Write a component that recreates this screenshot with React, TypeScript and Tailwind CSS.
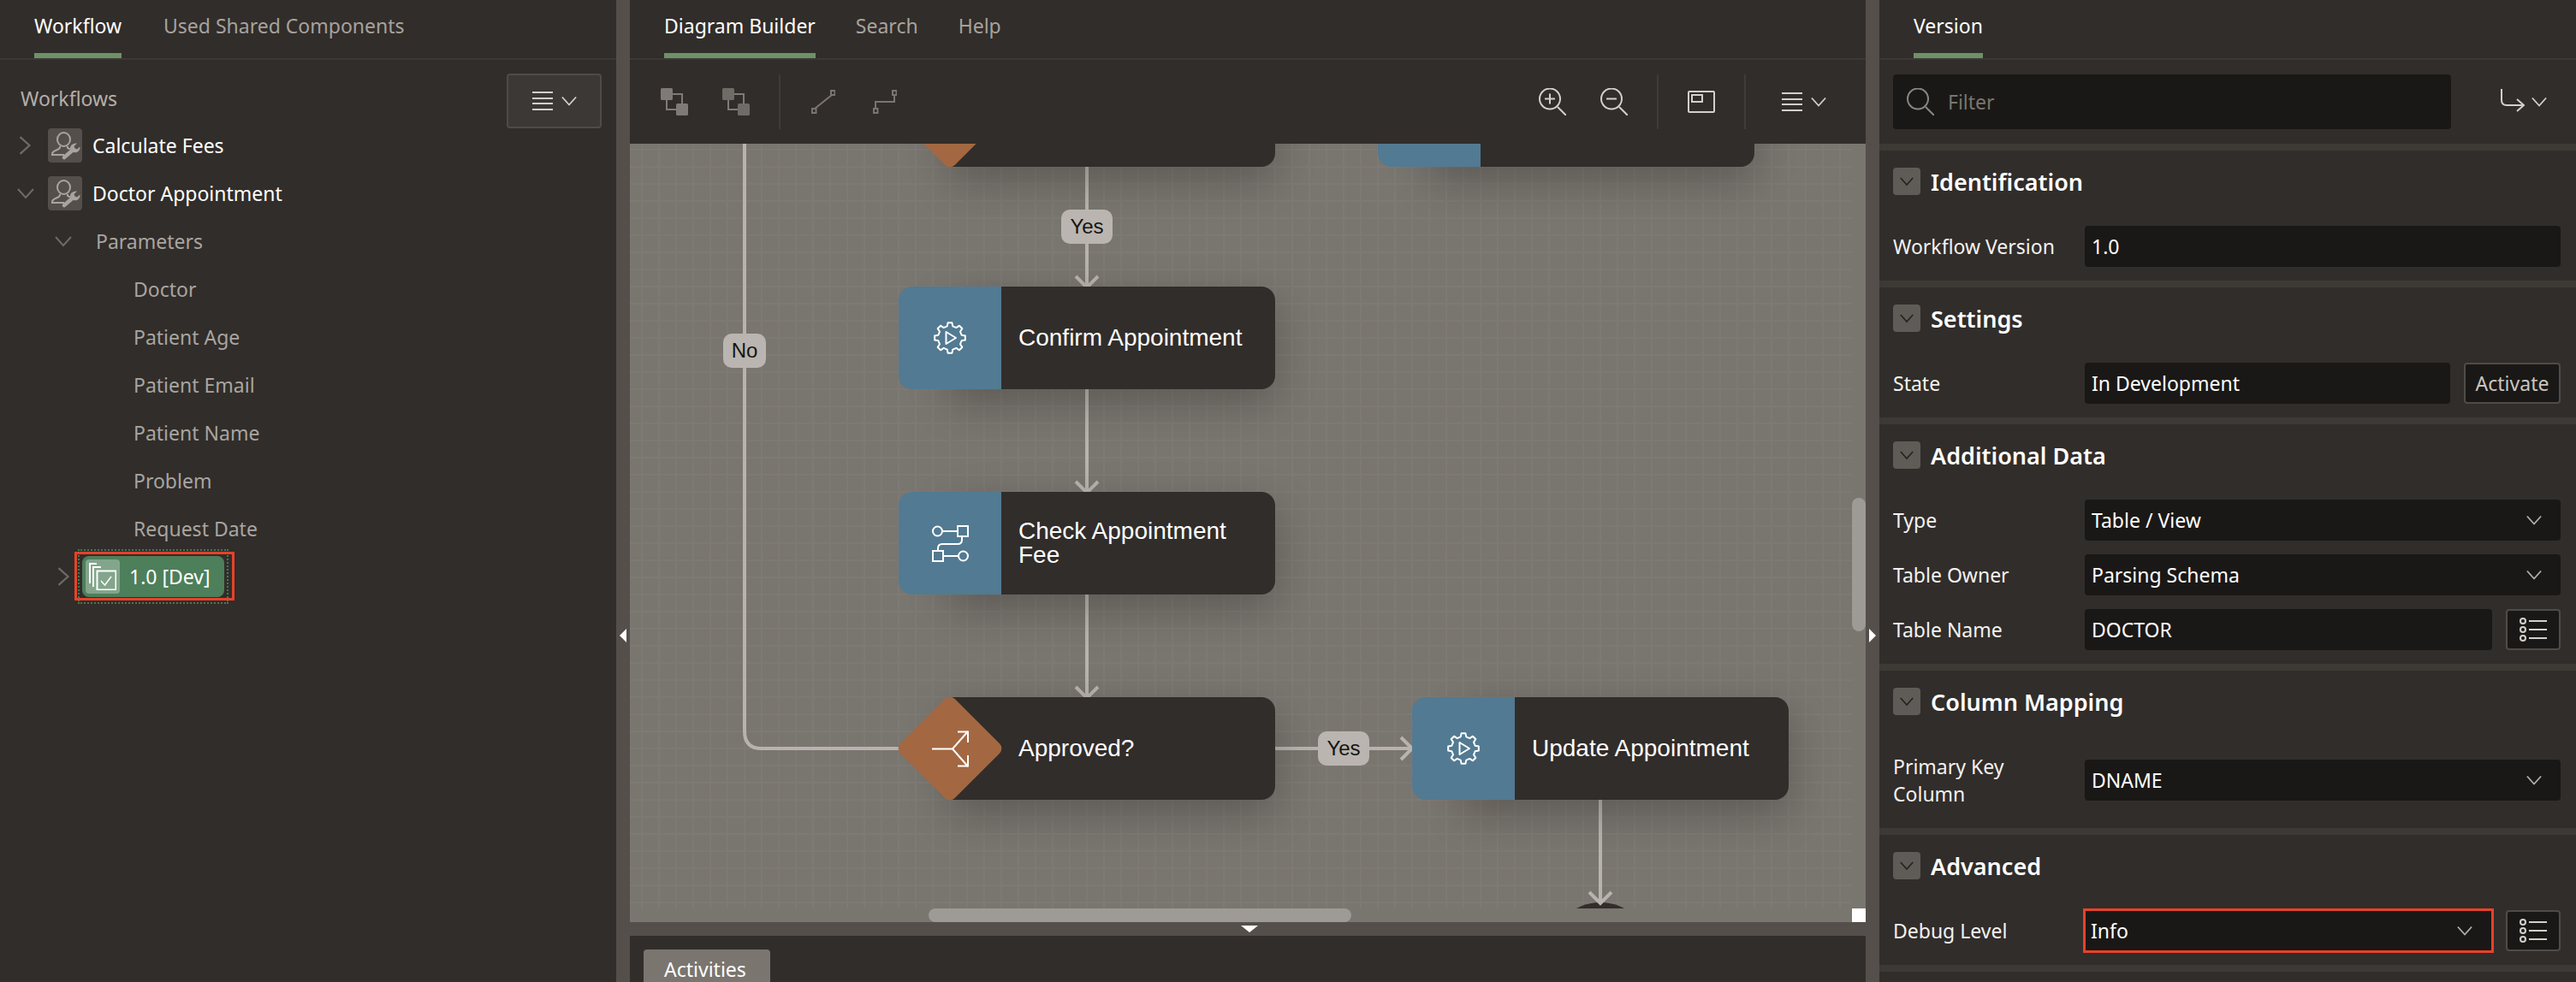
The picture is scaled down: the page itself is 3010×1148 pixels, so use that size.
const Chevron = ({ dir = "down", className = "" }: { dir?: "down" | "right"; className?: string }) => (
  <svg viewBox="0 0 20 20" className={className} fill="none" stroke="currentColor" strokeWidth="2">
    {dir === "down" ? <path d="M1 5 L10 15 L19 5" /> : <path d="M5 1 L15 10 L5 19" />}
  </svg>
)

const Hamburger = ({ className = "" }: { className?: string }) => (
  <svg viewBox="0 0 24 22" className={className} fill="none" stroke="currentColor" strokeWidth="2">
    <path d="M0 1 H24 M0 8 H24 M0 14 H24 M0 21 H24" />
  </svg>
)

const PersonWrench = () => (
  <div className="flex h-10 w-10 shrink-0 items-center justify-center rounded bg-[#544f4a] text-[#a8a4a0]">
    <svg viewBox="0 0 40 40" className="h-10 w-10" fill="none" stroke="currentColor" strokeWidth="2">
      <ellipse cx="18.5" cy="13" rx="7.5" ry="8" />
      <path d="M14 21 V22 C14 26 5 25 5 30 V31 H19" />
      <path d="M23 21 V23 L26 24.5" />
      <path d="M19 34 L29.5 25" strokeWidth="4.5" strokeLinecap="round" />
      <path
        d="M26.5 25 C25 21 28 17 34 17.5 L30.5 21 L31.5 23.5 L34 24.5 L37.5 21.5 C38 26 34 29.5 30 28 Z"
        fill="currentColor"
        stroke="none"
      />
    </svg>
  </div>
)

const Tab = ({ label, active = false }: { label: string; active?: boolean }) => (
  <div
    className={`h-[68px] border-b-[6px] pt-[15px] text-[23px] leading-[30px] ${
      active ? "border-[#6e9168] text-white" : "border-transparent text-[#a7a29d]"
    }`}
  >
    {label}
  </div>
)

const params = ["Doctor", "Patient Age", "Patient Email", "Patient Name", "Problem", "Request Date"]

function LeftPanel() {
  return (
    <div className="h-full w-[720px] shrink-0 bg-[#312d2a]">
      <div className="flex h-[70px] gap-[49px] border-b-2 border-[#3c3835] pl-[40px]">
        <Tab label="Workflow" active />
        <Tab label="Used Shared Components" />
      </div>
      <div className="relative pl-[24px] pt-[30px]">
        <div className="h-[30px] text-[23px] leading-[30px] text-[#b3afaa]">Workflows</div>
        <button className="absolute right-[17px] top-[16px] flex h-[64px] w-[111px] items-center justify-center gap-[10px] rounded border-2 border-[#4f4b47] bg-[#3c3835] text-[#d3cfca]">
          <Hamburger className="h-[22px] w-[24px]" />
          <Chevron className="h-[18px] w-[18px]" />
        </button>
      </div>
      <div className="mt-[12px] text-[23px]">
        <div className="flex h-[56px] items-center text-white">
          <Chevron dir="right" className="ml-[18px] mr-[16px] h-[22px] w-[22px] text-[#6f6a65]" />
          <PersonWrench />
          <span className="ml-[12px]">Calculate Fees</span>
        </div>
        <div className="flex h-[56px] items-center text-white">
          <Chevron className="ml-[20px] mr-[16px] h-[20px] w-[20px] text-[#6f6a65]" />
          <PersonWrench />
          <span className="ml-[12px]">Doctor Appointment</span>
        </div>
        <div className="flex h-[56px] items-center text-[#a9a5a0]">
          <Chevron className="ml-[64px] mr-[28px] h-[20px] w-[20px] text-[#6f6a65]" />
          <span>Parameters</span>
        </div>
        {params.map((p) => (
          <div key={p} className="flex h-[56px] items-center pl-[156px] text-[#a9a5a0]">
            {p}
          </div>
        ))}
        <div className="relative flex h-[56px] items-center">
          <Chevron dir="right" className="ml-[63px] mr-[11px] h-[22px] w-[22px] text-[#6f6a65]" />
          <div className="relative flex h-[48px] w-[166px] items-center rounded-lg bg-[#4d7f5b] pl-[4px] text-white">
            <div className="absolute -inset-x-[5px] -inset-y-[8px] border-2 border-dotted border-[#3f7a56]" />
            <div className="absolute -left-[9px] -right-[12px] -top-[5px] -bottom-[4px] border-[3px] border-[#e8412a]" />
            <div className="flex h-10 w-10 items-center justify-center rounded bg-[#83a58c]">
              <svg viewBox="0 0 32 32" className="h-8 w-8" fill="none" stroke="white" strokeWidth="2">
                <path d="M9 1 H1 V24" />
                <path d="M14 5 H5 V28" />
                <rect x="9.5" y="9.5" width="22" height="22" />
                <path d="M14 21 L18.5 26 L26 16" strokeWidth="1.5" />
              </svg>
            </div>
            <span className="ml-[11px] whitespace-nowrap">1.0 [Dev]</span>
          </div>
        </div>
      </div>
    </div>
  )
}

const Divider = ({ className = "" }: { className?: string }) => (
  <div className={`h-[64px] w-[2px] bg-[#3f3b38] ${className}`} />
)

const GroupIcon = ({ fill, stroke, className = "" }: { fill: string; stroke: string; className?: string }) => (
  <svg viewBox="0 0 32 32" className={`h-8 w-8 ${className}`} fill="none">
    <rect x="7" y="7" width="18" height="18" stroke={stroke} strokeWidth="2" />
    <rect x="0" y="0" width="14" height="14" rx="1.5" fill={fill} />
    <rect x="18" y="18" width="14" height="14" rx="1.5" fill={fill} />
  </svg>
)

const ZoomIcon = ({ plus = false, className = "" }: { plus?: boolean; className?: string }) => (
  <svg viewBox="0 0 32 32" className={`h-8 w-8 ${className}`} fill="none" stroke="currentColor" strokeWidth="2">
    <circle cx="13" cy="12.5" r="12" />
    <path d="M22 22 L32 32" />
    <path d="M7 12.5 H19" />
    {plus && <path d="M13 6.5 V18.5" />}
  </svg>
)

function Toolbar() {
  return (
    <div className="flex h-[98px] items-center bg-[#312d2a] text-[#d3cfca]">
      <GroupIcon fill="#7f7a75" stroke="#7f7a75" className="ml-[36px]" />
      <GroupIcon fill="#6f6b66" stroke="#7f7a75" className="ml-[40px]" />
      <Divider className="ml-[34px]" />
      <svg viewBox="0 0 28 28" className="ml-[36px] h-7 w-7" fill="none" stroke="#7a756f" strokeWidth="2">
        <rect x="1" y="22" width="4.5" height="5" />
        <rect x="23" y="1" width="4.5" height="5" />
        <path d="M4 22 L24 6" />
      </svg>
      <svg viewBox="0 0 28 28" className="ml-[44px] h-7 w-7" fill="none" stroke="#7a756f" strokeWidth="2">
        <rect x="1" y="22" width="4.5" height="5" />
        <rect x="23" y="1" width="4.5" height="5" />
        <path d="M3 22 V14 H25 V6" />
      </svg>
      <ZoomIcon plus className="ml-auto" />
      <ZoomIcon className="ml-[40px]" />
      <Divider className="ml-[34px]" />
      <svg viewBox="0 0 32 26" className="ml-[34px] h-[26px] w-8" fill="none" stroke="currentColor" strokeWidth="2">
        <rect x="1" y="1" width="30" height="24" rx="1" />
        <rect x="5" y="5" width="12" height="8" />
      </svg>
      <Divider className="ml-[34px]" />
      <Hamburger className="ml-[42px] h-[22px] w-[24px]" />
      <Chevron className="ml-[10px] mr-[46px] h-[18px] w-[18px]" />
    </div>
  )
}

// 8 tooth gear outline, used on the blue activity tiles
const gearPath = (() => {
  const pts: string[] = []
  for (let i = 0; i < 8; i++) {
    const a = (i * Math.PI) / 4 - Math.PI / 2
    const step = Math.PI / 4
    const p = (r: number, t: number) => `${(20 + r * Math.cos(t)).toFixed(2)} ${(20 + r * Math.sin(t)).toFixed(2)}`
    pts.push(`${i === 0 ? "M" : "L"}${p(14, a - step * 0.3)}`)
    pts.push(`L${p(18, a - step * 0.17)}`)
    pts.push(`L${p(18, a + step * 0.17)}`)
    pts.push(`L${p(14, a + step * 0.3)}`)
  }
  return pts.join(" ") + " Z"
})()

const GearPlay = () => (
  <svg viewBox="0 0 40 40" className="h-10 w-10" fill="none" stroke="white" strokeWidth="2" strokeLinejoin="round">
    <path d={gearPath} />
    <path d="M15.5 13 L27 20 L15.5 27 Z" />
  </svg>
)

const BranchIcon = () => (
  <svg viewBox="0 0 43 43" className="h-[43px] w-[43px]" fill="none" stroke="white" strokeWidth="2">
    <circle cx="6.5" cy="7" r="5.5" />
    <rect x="30" y="1" width="12" height="12" />
    <path d="M12 7 H30" />
    <path d="M35 13 V17 Q35 22 30 22 H12 Q7 22 7 27 V30" />
    <rect x="1" y="30" width="12" height="12" />
    <circle cx="36.5" cy="36" r="5.5" />
    <path d="M13 36 H31" />
  </svg>
)

const SplitIcon = () => (
  <svg viewBox="0 0 43 43" className="h-[43px] w-[43px]" fill="none" stroke="white" strokeWidth="2">
    <path d="M0 21.5 H24 L42 1 M24 21.5 L42 42" />
    <path d="M30 1.5 H42 V14 M30 41.5 H42 V29" />
  </svg>
)

const Node = ({
  label,
  icon,
  className,
  diamond = false,
}: {
  label: string
  icon: React.ReactNode
  className: string
  diamond?: boolean
}) => (
  <div className={`absolute h-[120px] w-[440px] ${className}`}>
    <div className="absolute inset-y-0 left-[60px] right-0 flex items-center rounded-r-2xl bg-[#312d2a] pl-[80px] pr-[24px] text-[28px] leading-[28px] text-white shadow-[0_16px_50px_rgba(0,0,0,0.24)] font-['Liberation_Sans',sans-serif]">
      {label}
    </div>
    {diamond ? (
      <div className="absolute left-[15px] top-[15px] h-[90px] w-[90px] rotate-45 rounded-lg bg-[#a36841]" />
    ) : (
      <div className="absolute inset-y-0 left-0 w-[120px] rounded-l-2xl bg-[#527a92]" />
    )}
    <div className="absolute inset-y-0 left-0 flex w-[120px] items-center justify-center">{icon}</div>
  </div>
)

const EdgeLabel = ({ label, className }: { label: string; className: string }) => (
  <div
    className={`absolute flex h-[40px] items-center justify-center rounded-[10px] bg-[#bab5b0] text-[24px] text-[#161513] font-['Liberation_Sans',sans-serif] ${className}`}
  >
    {label}
  </div>
)

function Canvas() {
  // offsets are the diagram's own coordinates, canvas origin is at page 736,168
  return (
    <div className="relative min-h-0 flex-1 bg-[#79756f]">
      <div className="absolute left-0 top-0 h-[894px] w-[1428px] overflow-hidden bg-[linear-gradient(#7d7974_2px,transparent_2px),linear-gradient(90deg,#7d7974_2px,transparent_2px)] bg-[size:20px_20px] bg-[position:13px_6px]">
        <svg
          viewBox="736 168 1428 894"
          className="absolute left-0 top-0 h-[894px] w-[1428px]"
          fill="none"
          stroke="#b8b3ae"
          strokeWidth="4"
        >
          <path d="M870 168 V855 Q870 875 890 875 H1060" />
          <path d="M1270 195 V335 M1257 323 L1270 336 L1283 323" />
          <path d="M1270 455 V575 M1257 563 L1270 576 L1283 563" />
          <path d="M1270 695 V815 M1257 803 L1270 816 L1283 803" />
          <path d="M1490 875 H1650 M1637 862 L1650 875 L1637 888" />
          <circle cx="1870" cy="1116" r="61" fill="#312d2a" stroke="none" />
          <path d="M1870 935 V1055 M1857 1043 L1870 1056 L1883 1043" />
        </svg>
        <Node label="" icon={null} diamond className="left-[314px] top-[-93px]" />
        <Node label="" icon={null} className="left-[874px] top-[-93px]" />
        <Node label="Confirm Appointment" icon={<GearPlay />} className="left-[314px] top-[167px]" />
        <Node label="Check Appointment Fee" icon={<BranchIcon />} className="left-[314px] top-[407px]" />
        <Node label="Approved?" icon={<SplitIcon />} diamond className="left-[314px] top-[647px]" />
        <Node label="Update Appointment" icon={<GearPlay />} className="left-[914px] top-[647px]" />
        <EdgeLabel label="Yes" className="left-[504px] top-[77px] w-[60px]" />
        <EdgeLabel label="No" className="left-[109px] top-[222px] w-[50px]" />
        <EdgeLabel label="Yes" className="left-[804px] top-[687px] w-[60px]" />
      </div>
      <div className="absolute left-[349px] top-[894px] h-[16px] w-[494px] rounded-full bg-[#9e9a96]" />
      <div className="absolute right-0 top-[414px] h-[156px] w-[16px] rounded-full bg-[#9e9a96]" />
      <div className="absolute bottom-0 right-0 h-[16px] w-[16px] bg-white" />
    </div>
  )
}

function CenterPanel() {
  return (
    <div className="flex h-full w-[1444px] shrink-0 flex-col bg-[#312d2a]">
      <div className="flex h-[70px] shrink-0 gap-[47px] border-b-2 border-[#3c3835] pl-[40px]">
        <Tab label="Diagram Builder" active />
        <Tab label="Search" />
        <Tab label="Help" />
      </div>
      <Toolbar />
      <Canvas />
      <div className="relative h-[16px] shrink-0 bg-[#544f4a]">
        <div className="absolute left-[714px] top-[4px] h-0 w-0 border-x-[10px] border-t-[8px] border-x-transparent border-t-white" />
      </div>
      <div className="h-[54px] shrink-0 pl-[16px] pt-[16px]">
        <div className="h-[38px] w-[148px] rounded-t bg-[#7a756f] pl-[24px] pt-[6px] text-[23px] leading-[34px] text-white">
          Activities
        </div>
      </div>
    </div>
  )
}

const ListButton = () => (
  <button className="flex h-[48px] w-[64px] shrink-0 items-center justify-center rounded border-2 border-[#4f4b47] bg-[#1a1816] text-[#d3cfca]">
    <svg viewBox="0 0 32 32" className="h-8 w-8" fill="none" stroke="currentColor" strokeWidth="2">
      <circle cx="4" cy="6" r="3" />
      <circle cx="4" cy="16" r="3" />
      <circle cx="4" cy="26" r="3" />
      <path d="M11 6 H32 M11 16 H32 M11 26 H32" />
    </svg>
  </button>
)

const Field = ({ value, select = false, className = "" }: { value: string; select?: boolean; className?: string }) => (
  <div className={`flex h-[48px] min-w-0 flex-1 items-center justify-between rounded bg-[#1a1816] pl-[8px] pr-[22px] text-white ${className}`}>
    <span>{value}</span>
    {select && <Chevron className="h-[18px] w-[18px] text-[#b3afaa]" />}
  </div>
)

const Row = ({ label, children, tall = false }: { label: string; children: React.ReactNode; tall?: boolean }) => (
  <div className={`flex items-center ${tall ? "h-[80px]" : "h-[48px]"}`}>
    <div className="w-[224px] shrink-0 pr-[16px] leading-[32px] text-[#f4f2f0]">{label}</div>
    <div className="flex min-w-0 flex-1 items-center gap-[16px]">{children}</div>
  </div>
)

const Section = ({ title, children }: { title: string; children: React.ReactNode }) => (
  <div className="border-t-8 border-[#3d3935] px-[18px] pb-[16px] pl-[16px] pt-[20px]">
    <div className="flex h-[32px] items-center">
      <div className="flex h-[32px] w-[32px] items-center justify-center rounded bg-[#5f5b56] text-[#25211e]">
        <Chevron className="h-[16px] w-[18px]" />
      </div>
      <div className="ml-[12px] pt-[2px] text-[27px] font-semibold text-white">{title}</div>
    </div>
    <div className="mt-[36px] flex flex-col gap-[16px]">{children}</div>
  </div>
)

function RightPanel() {
  return (
    <div className="h-full flex-1 overflow-hidden bg-[#312d2a] text-[23px]">
      <div className="flex h-[70px] border-b-2 border-[#3c3835] pl-[40px]">
        <Tab label="Version" active />
      </div>
      <div className="flex h-[98px] items-center pl-[16px] text-[#d3cfca]">
        <div className="flex h-[64px] w-[652px] items-center rounded bg-[#1a1816] pl-[16px] text-[#7a756f]">
          <svg viewBox="0 0 32 32" className="h-8 w-8 text-[#8b8681]" fill="none" stroke="currentColor" strokeWidth="2">
            <circle cx="13" cy="12.5" r="12" />
            <path d="M22 22 L32 32" />
          </svg>
          <span className="ml-[16px]">Filter</span>
        </div>
        <svg viewBox="0 0 28 30" className="ml-[58px] h-[30px] w-[28px]" fill="none" stroke="currentColor" strokeWidth="2">
          <path d="M1 0 V13 Q1 19 7 19 H27 M19 12 L27 19 L19 26" />
        </svg>
        <Chevron className="ml-[8px] h-[18px] w-[18px]" />
      </div>
      <Section title="Identification">
        <Row label="Workflow Version">
          <Field value="1.0" />
        </Row>
      </Section>
      <Section title="Settings">
        <Row label="State">
          <Field value="In Development" />
          <button className="flex h-[48px] w-[113px] shrink-0 items-center justify-center rounded border-2 border-[#4f4b47] bg-[#1a1816] text-[#c9c5c0]">
            Activate
          </button>
        </Row>
      </Section>
      <Section title="Additional Data">
        <Row label="Type">
          <Field value="Table / View" select />
        </Row>
        <Row label="Table Owner">
          <Field value="Parsing Schema" select />
        </Row>
        <Row label="Table Name">
          <Field value="DOCTOR" />
          <ListButton />
        </Row>
      </Section>
      <Section title="Column Mapping">
        <Row label="Primary Key Column" tall>
          <Field value="DNAME" select />
        </Row>
      </Section>
      <Section title="Advanced">
        <Row label="Debug Level">
          <div className="-m-[2px] flex min-w-0 flex-1 rounded-none border-[3px] border-[#e8412a]">
            <Field value="Info" select className="!h-[46px] rounded-none !pl-[6px]" />
          </div>
          <ListButton />
        </Row>
      </Section>
      <div className="h-[12px] border-t-8 border-[#3d3935]" />
    </div>
  )
}

export default function App() {
  return (
    <div className="relative flex h-[1148px] w-[3010px] overflow-hidden bg-[#312d2a] font-['Noto_Sans',sans-serif]">
      <LeftPanel />
      <div className="relative h-full w-[16px] shrink-0 bg-[#544f4a]">
        <div className="absolute left-[4px] top-[735px] h-0 w-0 border-y-[8px] border-r-[8px] border-y-transparent border-r-white" />
      </div>
      <CenterPanel />
      <div className="relative h-full w-[16px] shrink-0 bg-[#544f4a]">
        <div className="absolute left-[4px] top-[735px] h-0 w-0 border-y-[8px] border-l-[8px] border-y-transparent border-l-white" />
      </div>
      <RightPanel />
    </div>
  )
}
